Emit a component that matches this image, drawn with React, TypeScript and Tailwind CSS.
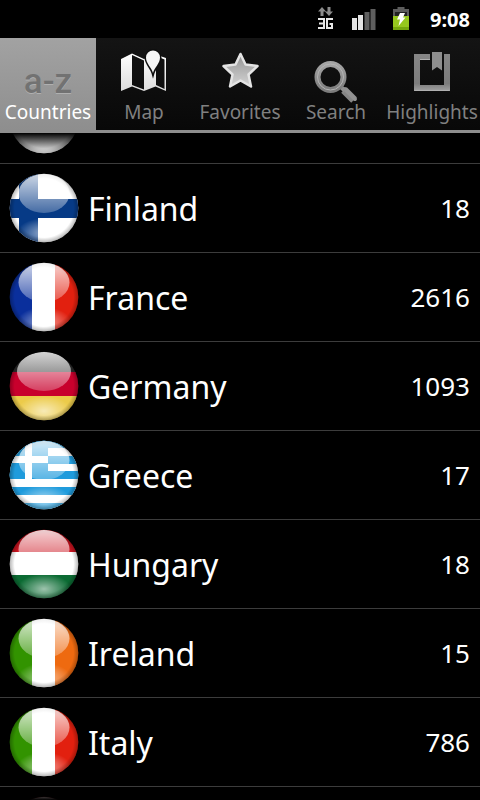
import { useId, useLayoutEffect, useRef, useState } from "react";
import type { ReactNode } from "react";
import clsx from "clsx";

type Band = { x?: number; y?: number; w?: number; h?: number; fill: string };

// Flags are drawn on a 70 x 70 square
const vertical = (a: string, b: string, c: string): Band[] => [
    { w: 24, fill: a },
    { x: 23, w: 23, fill: b },
    { x: 46, w: 24, fill: c },
];

const horizontal = (a: string, b: string, c: string): Band[] => [
    { h: 24, fill: a },
    { y: 23, h: 23, fill: b },
    { y: 46, h: 24, fill: c },
];

const flags: Record<string, Band[]> = {
    ee: horizontal("#1791d8", "#111111", "#ffffff"),
    fi: [
        { fill: "#ffffff" },
        { x: 10, w: 19, fill: "#063a86" },
        { y: 26, h: 19, fill: "#063a86" },
    ],
    fr: vertical("#0a2f9c", "#ffffff", "#e2200f"),
    de: [
        { h: 22, fill: "#2c2c2c" },
        { y: 21, h: 24, fill: "#c8002c" },
        { y: 45, h: 25, fill: "#eccb4a" },
    ],
    gr: [
        { fill: "#ffffff" },
        { h: 8, fill: "#1f9bdc" },
        { y: 16, h: 8, fill: "#1f9bdc" },
        { y: 31, h: 8, fill: "#1f9bdc" },
        { y: 47, h: 8, fill: "#1f9bdc" },
        { y: 63, h: 7, fill: "#1f9bdc" },
        { w: 39, h: 39, fill: "#1f9bdc" },
        { x: 16, w: 7, h: 39, fill: "#ffffff" },
        { y: 16, w: 39, h: 7, fill: "#ffffff" },
    ],
    hu: horizontal("#cc1420", "#ffffff", "#0b6b33"),
    ie: vertical("#329300", "#ffffff", "#ee6a10"),
    it: vertical("#329300", "#ffffff", "#e2200f"),
    lv: horizontal("#8c1420", "#ffffff", "#8c1420"),
};

const countries = [
    { code: "ee" },
    { code: "fi", name: "Finland", count: 18 },
    { code: "fr", name: "France", count: 2616 },
    { code: "de", name: "Germany", count: 1093 },
    { code: "gr", name: "Greece", count: 17 },
    { code: "hu", name: "Hungary", count: 18 },
    { code: "ie", name: "Ireland", count: 15 },
    { code: "it", name: "Italy", count: 786 },
    { code: "lv" },
];

const Flag = ({ code }: { code: string }) => {
    const id = useId();
    return (
        <svg viewBox="0 0 70 70" className="size-[70px] shrink-0" aria-hidden="true">
            <defs>
                <clipPath id={`${id}c`}>
                    <circle cx="35" cy="35" r="34.3" />
                </clipPath>
                <linearGradient id={`${id}g`} x1="0" y1="0" x2="0" y2="1">
                    <stop offset="0" stopColor="#fff" stopOpacity="0.8" />
                    <stop offset="1" stopColor="#fff" stopOpacity="0.25" />
                </linearGradient>
                <radialGradient id={`${id}s`}>
                    <stop offset="0.84" stopColor="#000" stopOpacity="0" />
                    <stop offset="1" stopColor="#000" stopOpacity="0.32" />
                </radialGradient>
                <radialGradient id={`${id}b`}>
                    <stop offset="0" stopColor="#fff" stopOpacity="0.6" />
                    <stop offset="1" stopColor="#fff" stopOpacity="0" />
                </radialGradient>
            </defs>
            <g clipPath={`url(#${id}c)`}>
                {flags[code].map((b, i) => (
                    <rect key={i} x={b.x ?? 0} y={b.y ?? 0} width={b.w ?? 70} height={b.h ?? 70} fill={b.fill} />
                ))}
                <ellipse cx="35" cy="60" rx="27" ry="15" fill={`url(#${id}b)`} />
                <circle cx="35" cy="35" r="35" fill={`url(#${id}s)`} />
                <ellipse cx="35" cy="20.5" rx={code === "de" ? 27 : 25.5} ry="19.5" fill={`url(#${id}g)`} />
            </g>
        </svg>
    );
};

const AzIcon = () => (
    <span className="pt-[14px] font-[Roboto,sans-serif] text-[35px] leading-10 font-medium text-[#727272] [text-shadow:0_1px_0_#b0b0b0]">
        a-z
    </span>
);

const MapIcon = () => (
    <svg viewBox="0 0 64 50" className="h-[50px] w-16" aria-hidden="true">
        <defs>
            <linearGradient id="map-fill" x1="0" y1="0" x2="0" y2="1">
                <stop offset="0" stopColor="#ffffff" />
                <stop offset="1" stopColor="#dcdcdc" />
            </linearGradient>
        </defs>
        <path
            fillRule="evenodd"
            fill="url(#map-fill)"
            d="M9 11 20 5.500 32 11 43.500 6.500 54 10V43L43.500 38.500 32 43 20 38.500 9 43ZM20 7V37L32 41.500V12.500ZM44 8V37L52.500 41V11.500Z"
        />
        <path
            d="M41 25C39.500 19.500 34 15.500 34 9.500a7 7 0 0 1 14 0C48 15.500 42.500 19.500 41 25Z"
            fill="#f4f4f4"
            stroke="#0e0e0e"
            strokeWidth="3"
            paintOrder="stroke"
        />
    </svg>
);

const StarIcon = () => (
    <svg viewBox="0 0 64 50" className="h-[50px] w-16" aria-hidden="true">
        <defs>
            <linearGradient id="star-fill" x1="0" y1="0" x2="0" y2="1">
                <stop offset="0" stopColor="#8f8f8f" />
                <stop offset="0.35" stopColor="#aaaaaa" />
                <stop offset="1" stopColor="#d4d4d4" />
            </linearGradient>
        </defs>
        <path
            d="M32.500 6 37.500 16.500 49.500 18 40.500 26.500 43 38.500 32.500 32.500 22 38.500 24.500 26.500 15.500 18 27.500 16.500Z"
            fill="url(#star-fill)"
            stroke="#e4e4e4"
            strokeWidth="2.500"
            strokeLinejoin="round"
        />
    </svg>
);

const SearchIcon = () => (
    <svg viewBox="0 0 64 58" className="h-[58px] w-16" aria-hidden="true">
        <defs>
            <linearGradient id="search-ring" x1="0" y1="0" x2="0" y2="1">
                <stop offset="0" stopColor="#a4a4a4" />
                <stop offset="1" stopColor="#7c7c7c" />
            </linearGradient>
        </defs>
        <path d="M40 42 50 52" stroke="#858585" strokeWidth="8" />
        <path d="M41 41 51 51" stroke="#929292" strokeWidth="4" strokeLinecap="round" />
        <path d="M36 38 41 43" stroke="#909090" strokeWidth="4" />
        <circle cx="26.500" cy="29" r="13" fill="none" stroke="url(#search-ring)" strokeWidth="6" />
        <circle cx="26.500" cy="29" r="13" fill="none" stroke="#b4b4b4" strokeWidth="1" />
    </svg>
);

const BookmarkIcon = () => (
    <svg viewBox="0 0 64 50" className="h-[50px] w-16" aria-hidden="true">
        <defs>
            <linearGradient id="book-fill" x1="0" y1="0" x2="0" y2="1">
                <stop offset="0" stopColor="#868686" />
                <stop offset="0.8" stopColor="#7c7c7c" />
                <stop offset="1" stopColor="#a0a0a0" />
            </linearGradient>
        </defs>
        <path d="M14 6H30V11H20V37H44V6H50V43H14Z" fill="url(#book-fill)" />
        <path d="M20 11.500H30M14.500 42.500H49.500" stroke="#b0b0b0" />
        <path d="M32 4H42V22.500L37 19 32 22.500Z" fill="#8e8e8e" />
    </svg>
);

const NetworkIcon = () => (
    <svg viewBox="0 0 18 24" className="h-6 w-[18px]" aria-hidden="true">
        <path d="M5 0 9 4.500H6.500V9H3.500V4.500H1ZM12 9 8 4.500H10.500V0H13.500V4.500H16Z" fill="#8a8a8a" />
        <path d="M1 12H7V21H1M2 16.500H7" fill="none" stroke="#e8e8e8" strokeWidth="2" />
        <path d="M16 12H10V21H15V17H12.500" fill="none" stroke="#e8e8e8" strokeWidth="2" />
    </svg>
);

const SignalIcon = () => (
    <svg viewBox="0 0 24 22" className="h-[22px] w-6" aria-hidden="true">
        <rect x="0" y="10" width="5" height="12" fill="#e4e4e4" />
        <rect x="6" y="7" width="5" height="15" fill="#e4e4e4" />
        <rect x="12.500" y="4" width="5" height="18" fill="#5e5e5e" />
        <rect x="18.500" y="1" width="5" height="21" fill="#5e5e5e" />
    </svg>
);

const BatteryIcon = () => (
    <svg viewBox="0 0 18 24" className="h-6 w-[18px]" aria-hidden="true">
        <path d="M5.500 0H12.500V2H17V23H1V2H5.500Z" fill="#5c5c5c" />
        <path d="M3 5H15V10H3Z" fill="#222222" />
        <path d="M1 9H17V23H1Z" fill="#96c81e" />
        <path d="M1 20H17V23H1Z" fill="#76a80e" />
        <path d="M8 6H13L11 10.500H13.500L6.500 19 8 12.500H5Z" fill="#ffffff" />
    </svg>
);

const StatusBar = () => (
    <header className="flex h-[38px] shrink-0 items-center justify-end bg-black pr-[10px]">
        <div className="flex items-center">
            <NetworkIcon />
            <div className="ml-[17px]">
                <SignalIcon />
            </div>
            <div className="ml-4">
                <BatteryIcon />
            </div>
        </div>
        <time className="ml-5 pt-0.5 text-xl font-bold">9:08</time>
    </header>
);

const tabs: { label: string; icon: ReactNode }[] = [
    { label: "Countries", icon: <AzIcon /> },
    { label: "Map", icon: <MapIcon /> },
    { label: "Favorites", icon: <StarIcon /> },
    { label: "Search", icon: <SearchIcon /> },
    { label: "Highlights", icon: <BookmarkIcon /> },
];

const TabBar = () => {
    const [active, setActive] = useState("Countries");

    return (
        <nav className="grid h-[95px] shrink-0 grid-cols-5">
            {tabs.map(({ label, icon }) => (
                <button
                    key={label}
                    type="button"
                    onClick={() => setActive(label)}
                    className={clsx(
                        "flex min-w-0 flex-col items-center border-b-3 border-[#8e8e8e] bg-linear-to-b",
                        active === label
                            ? "from-[#a2a2a2] to-[#8e8e8e] text-white"
                            : "from-[#141414] to-[#080808] text-[#808080]"
                    )}
                >
                    <span className="flex h-[60px] items-start justify-center pt-[10px]">{icon}</span>
                    <span className="text-[19px] leading-7 whitespace-nowrap">{label}</span>
                </button>
            ))}
        </nav>
    );
};

const CountryList = () => {
    const listRef = useRef<HTMLUListElement>(null);

    // Start a little way down the list, with the top row partly scrolled off
    useLayoutEffect(() => {
        if (listRef.current) listRef.current.scrollTop = 58;
    }, []);

    return (
        <div className="relative min-h-0 flex-1">
            <ul ref={listRef} className="h-full overflow-y-auto [scrollbar-width:none]">
                {countries.map(({ code, name, count }) => (
                    <li key={code} className="flex h-[89px] items-center border-b border-[#3c3c3c] pr-[10px] pl-[9px]">
                        <Flag code={code} />
                        <span className="ml-[9px] flex-1 pt-0.5 text-[32px] leading-10">{name}</span>
                        <span className="text-[26px] leading-9">{count}</span>
                    </li>
                ))}
            </ul>
            {/* Fading edges over the half-scrolled rows */}
            <div className="pointer-events-none absolute inset-x-0 top-0 h-5 bg-linear-to-b from-black to-transparent" />
            <div className="pointer-events-none absolute inset-x-0 bottom-0 h-3 bg-linear-to-t from-black to-transparent" />
        </div>
    );
};

export default function App() {
    return (
        <div className="flex h-screen flex-col bg-black font-['Noto_Sans','Open_Sans',sans-serif] text-white">
            <StatusBar />
            <TabBar />
            <CountryList />
        </div>
    );
}
